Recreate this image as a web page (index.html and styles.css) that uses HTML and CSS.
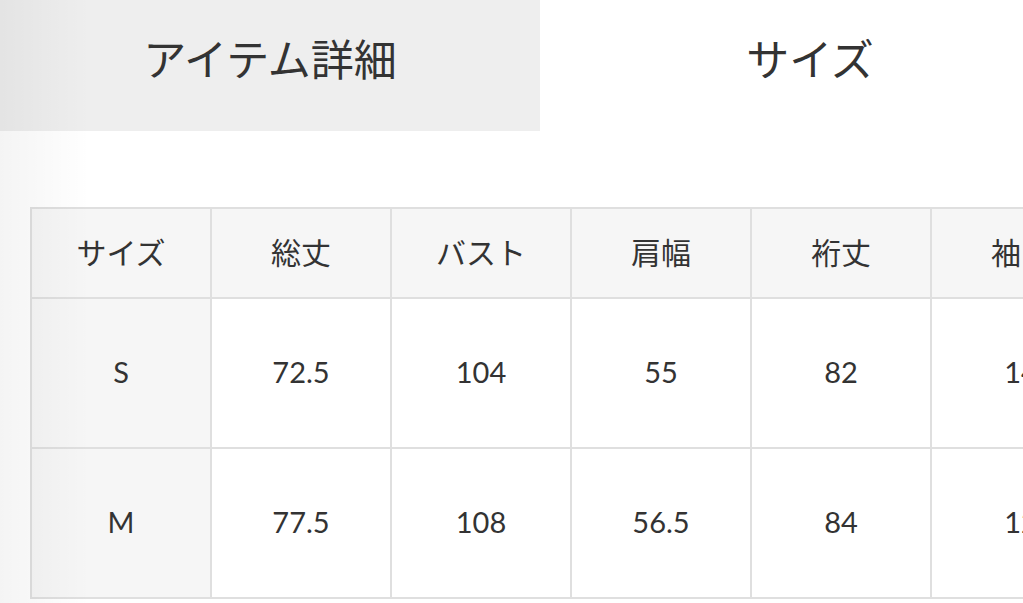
FILE: index.html
```html
<!DOCTYPE html>
<html lang="ja">
<head>
<meta charset="utf-8">
<link rel="stylesheet" href="styles.css">
</head>
<body>
<div class="page">
  <div class="tabs">
    <div class="tab tab-inactive">アイテム詳細</div>
    <div class="tab tab-active">サイズ</div>
  </div>
  <div class="content">
    <table class="size-table">
      <colgroup>
        <col class="c"><col class="c"><col class="c"><col class="c"><col class="c"><col class="c">
      </colgroup>
      <thead>
        <tr><th>サイズ</th><th>総丈</th><th>バスト</th><th>肩幅</th><th>裄丈</th><th>袖口</th></tr>
      </thead>
      <tbody>
        <tr><th class="rowhead">S</th><td>72.5</td><td>104</td><td>55</td><td>82</td><td>14</td></tr>
        <tr><th class="rowhead">M</th><td>77.5</td><td>108</td><td>56.5</td><td>84</td><td>12</td></tr>
      </tbody>
    </table>
  </div>
  <div class="edge-shade"></div>
</div>
</body>
</html>
```

FILE: styles.css
```css
html, body {
  margin: 0;
  padding: 0;
  background: #ffffff;
  overflow: hidden;
}
body {
  font-family: "Lato", "Noto Sans CJK JP", sans-serif;
  color: #333333;
}
.page {
  position: relative;
  width: 1080px;
  height: 603px;
}
.tabs {
  display: flex;
  height: 131px;
}
.tab {
  flex: 0 0 540px;
  display: flex;
  justify-content: center;
  align-items: flex-start;
  padding-top: 27px;
  box-sizing: border-box;
  font-family: "Noto Sans CJK JP", sans-serif;
  font-size: 43px;
  line-height: 60px;
  color: #333333;
}
.tab-inactive {
  background: #eeeeee;
}
.tab-active {
  background: #ffffff;
}
.content {
  padding: 76px 0 0 30px;
}
.size-table {
  border-collapse: collapse;
  table-layout: fixed;
  width: 1080px;
}
.size-table col.c {
  width: 180px;
}
.size-table th,
.size-table td {
  border: 2px solid #dfdfdf;
  text-align: center;
  vertical-align: middle;
  font-weight: 400;
  padding: 0;
  color: #333333;
}
.size-table thead th {
  height: 83px;
  padding-bottom: 5px;
  background: #f6f6f6;
  font-family: "Noto Sans CJK JP", sans-serif;
  font-size: 30px;
}
.size-table tbody th,
.size-table tbody td {
  height: 145px;
  padding-bottom: 3px;
  font-size: 29px;
}
.size-table tbody th.rowhead {
  background: #f6f6f6;
}
.edge-shade {
  position: absolute;
  left: 0;
  top: 0;
  width: 90px;
  height: 603px;
  background: linear-gradient(to right, rgba(0,0,0,0.045), rgba(0,0,0,0));
  pointer-events: none;
}
```
